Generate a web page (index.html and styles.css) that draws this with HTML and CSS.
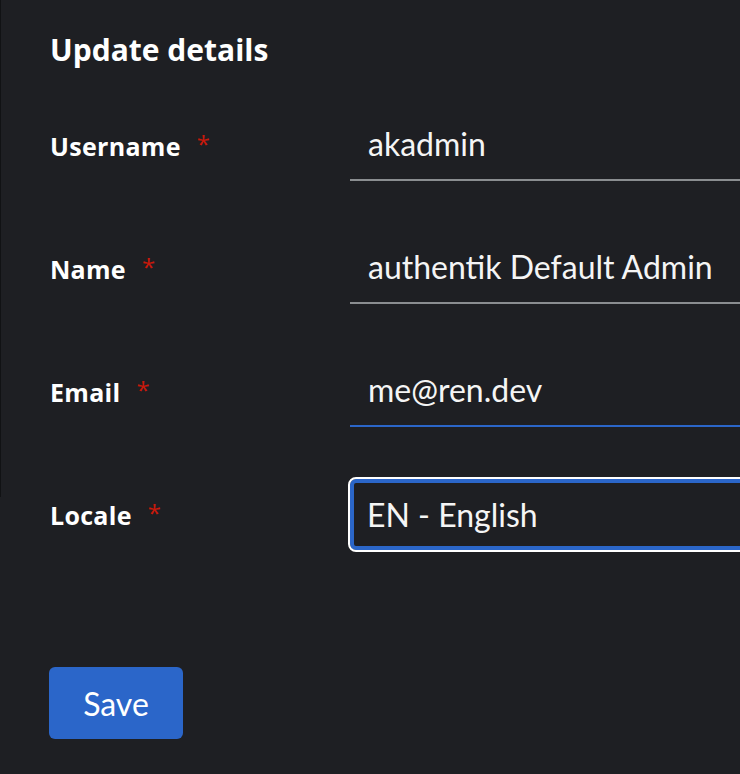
FILE: index.html
```html
<!DOCTYPE html>
<html lang="en">
<head>
<meta charset="utf-8">
<title>Update details</title>
<link rel="stylesheet" href="styles.css">
</head>
<body>
<div class="edge"></div>
<main class="page">
  <h1 class="title">Update details</h1>
  <form class="form">
    <div class="row">
      <label class="label">Username<span class="req">*</span></label>
      <div class="control"><input class="input" type="text" value="akadmin"></div>
    </div>
    <div class="row">
      <label class="label">Name<span class="req">*</span></label>
      <div class="control"><input class="input" type="text" value="authentik Default Admin"></div>
    </div>
    <div class="row">
      <label class="label">Email<span class="req">*</span></label>
      <div class="control"><input class="input input-email" type="text" value="me@ren.dev"></div>
    </div>
    <div class="row">
      <label class="label">Locale<span class="req">*</span></label>
      <div class="control"><div class="select">EN - English</div></div>
    </div>
    <div class="actions">
      <button class="btn" type="button">Save</button>
    </div>
  </form>
</main>
</body>
</html>
```

FILE: styles.css
```css
html, body {
  margin: 0;
  padding: 0;
  background: #1e1f23;
  overflow: hidden;
}
body {
  width: 740px;
  height: 774px;
  position: relative;
  font-family: "Lato", "Noto Sans", sans-serif;
  color: #f5f5f5;
}
.edge {
  position: absolute;
  left: 0;
  top: 0;
  width: 1px;
  height: 497px;
  background: #111214;
}
.page {
  padding: 28px 0 0 50px;
}
.title {
  margin: 0;
  font-family: "Open Sans", sans-serif;
  font-weight: 700;
  font-size: 30px;
  line-height: 44px;
  color: #ffffff;
}
.form {
  margin-top: 36px;
  display: flex;
  flex-direction: column;
  gap: 48px;
}
.row {
  display: flex;
  align-items: center;
  height: 75px;
}
.label {
  width: 300px;
  flex: none;
  font-family: "Open Sans", sans-serif;
  font-weight: 700;
  font-size: 25px;
  letter-spacing: 0.3px;
  color: #ffffff;
}
.req {
  color: #c9190b;
  margin-left: 16px;
  font-size: 24px;
  font-weight: 400;
  position: relative;
  top: -3px;
}
.control {
  flex: 1;
  height: 100%;
  margin-right: -20px;
}
.input {
  box-sizing: border-box;
  width: 100%;
  height: 73px;
  margin: 0;
  background: transparent;
  border: none;
  border-bottom: 2px solid #8a8d90;
  padding: 0 0 0 18px;
  color: #f5f5f5;
  font-family: "Lato", sans-serif;
  font-size: 32px;
  outline: none;
}
.input-email {
  border-bottom-color: #2b66c9;
}
.select {
  box-sizing: border-box;
  height: 75px;
  margin-left: -2px;
  border: 2px solid #ffffff;
  border-radius: 8px;
  display: flex;
  align-items: center;
  font-family: "Lato", sans-serif;
  font-size: 32px;
  color: #f5f5f5;
  padding-left: 17px;
  box-shadow: inset 0 0 0 4px #2b66c9;
}
.actions {
  margin-top: 67px;
}
.btn {
  width: 134px;
  height: 72px;
  margin-left: -1px;
  background: #2b66c9;
  border: none;
  border-radius: 6px;
  color: #ffffff;
  font-family: "Lato", sans-serif;
  font-size: 32px;
  padding: 0;
}
```
